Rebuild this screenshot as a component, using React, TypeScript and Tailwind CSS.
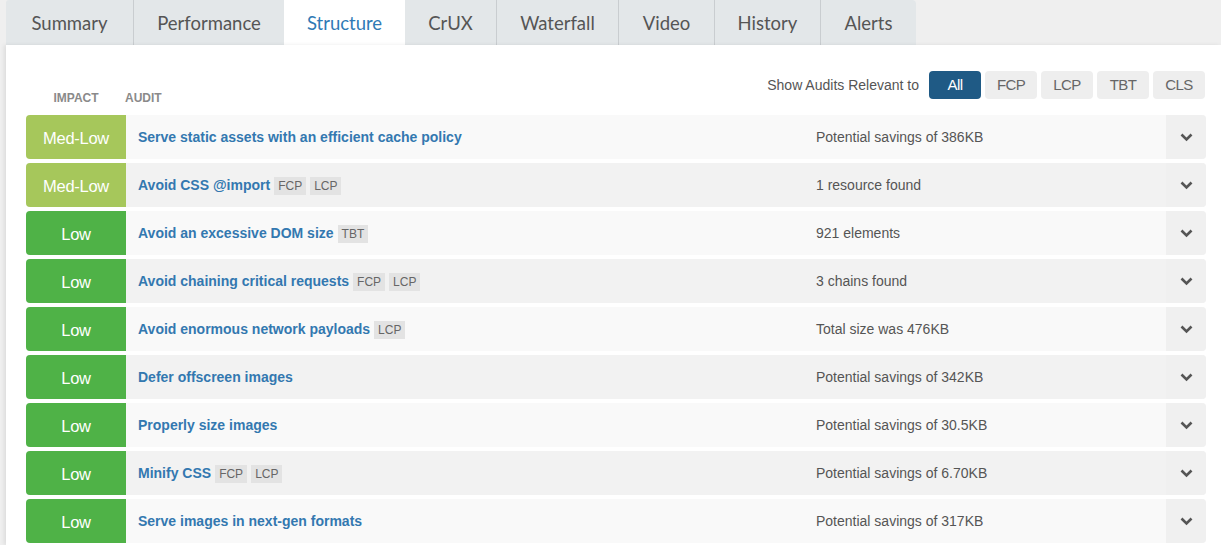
import React from "react";

type Row = {
  impact: "Med-Low" | "Low";
  title: string;
  tags: string[];
  desc: string;
};

const rows: Row[] = [
  { impact: "Med-Low", title: "Serve static assets with an efficient cache policy", tags: [], desc: "Potential savings of 386KB" },
  { impact: "Med-Low", title: "Avoid CSS @import", tags: ["FCP", "LCP"], desc: "1 resource found" },
  { impact: "Low", title: "Avoid an excessive DOM size", tags: ["TBT"], desc: "921 elements" },
  { impact: "Low", title: "Avoid chaining critical requests", tags: ["FCP", "LCP"], desc: "3 chains found" },
  { impact: "Low", title: "Avoid enormous network payloads", tags: ["LCP"], desc: "Total size was 476KB" },
  { impact: "Low", title: "Defer offscreen images", tags: [], desc: "Potential savings of 342KB" },
  { impact: "Low", title: "Properly size images", tags: [], desc: "Potential savings of 30.5KB" },
  { impact: "Low", title: "Minify CSS", tags: ["FCP", "LCP"], desc: "Potential savings of 6.70KB" },
  { impact: "Low", title: "Serve images in next-gen formats", tags: [], desc: "Potential savings of 317KB" },
];

const tabs: { label: string; w: string; active?: boolean }[] = [
  { label: "Summary", w: "w-[127px]" },
  { label: "Performance", w: "w-[151px]" },
  { label: "Structure", w: "w-[121px]", active: true },
  { label: "CrUX", w: "w-[91px]" },
  { label: "Waterfall", w: "w-[122px]" },
  { label: "Video", w: "w-[96px]" },
  { label: "History", w: "w-[106px]" },
  { label: "Alerts", w: "w-[96px]" },
];

function Chevron() {
  return (
    <svg width="13" height="9" viewBox="0 0 13 9">
      <polyline points="1.5,1.5 6.5,6.5 11.5,1.5" fill="none" stroke="#555" strokeWidth="2.6" />
    </svg>
  );
}

export default function App() {
  return (
    <div className="w-[1221px] h-[545px] overflow-hidden bg-[#efefef] flex flex-col pl-[6px] font-['Liberation_Sans',Arial,sans-serif]">
      <div className="flex h-[45px] shrink-0">
        {tabs.map((t, i) => (
          <div
            key={t.label}
            className={`${t.w} h-full flex items-center justify-center pt-[2px] text-[18.5px] font-['Lato',sans-serif] ${
              t.active ? "bg-white text-[#2f7ab5]" : "bg-[#e3e7e9] text-[#555]"
            } ${i > 0 && !t.active && !tabs[i - 1].active ? "border-l border-[#c9cdd0]" : ""} ${
              i === tabs.length - 1 ? "rounded-tr-[4px]" : ""
            } ${i === 0 ? "rounded-tl-[3px]" : ""}`}
          >
            {t.label}
          </div>
        ))}
      </div>
      <div className="flex-1 bg-white pl-[20px] pr-[15px] pt-[26px] shadow-[-2px_0_4px_rgba(0,0,0,0.08)]">
        <div className="flex items-end justify-between h-[28px]">
          <div className="flex items-end text-[12px] font-bold text-[#8a8a8a] translate-y-[8px]">
            <div className="w-[100px] text-center">IMPACT</div>
            <div className="-ml-[1px]">AUDIT</div>
          </div>
          <div className="flex items-center h-[28px] mr-[1px]">
            <span className="text-[14px] text-[#555] mr-[10px]">Show Audits Relevant to</span>
            <div className="flex gap-[4px]">
              {["All", "FCP", "LCP", "TBT", "CLS"].map((f, i) => (
                <div
                  key={f}
                  className={`w-[52px] h-[28px] rounded-[4px] flex items-center justify-center pt-[1px] text-[15px] tracking-[-0.6px] ${
                    i === 0 ? "bg-[#1f5a85] text-white" : "bg-[#eeeeee] text-[#666]"
                  }`}
                >
                  {f}
                </div>
              ))}
            </div>
          </div>
        </div>
        <div className="flex flex-col gap-[4px] mt-[16px]">
          {rows.map((r, i) => (
            <div
              key={r.title}
              className={`flex h-[44px] rounded-[4px] ${i % 2 === 0 ? "bg-[#f9f9f9]" : "bg-[#f2f2f2]"}`}
            >
              <div
                className={`w-[100px] shrink-0 rounded-l-[4px] flex items-center justify-center pt-[3px] text-white text-[16.5px] tracking-[-0.3px] ${
                  r.impact === "Low" ? "bg-[#4fb247]" : "bg-[#a6c75b]"
                }`}
              >
                {r.impact}
              </div>
              <div className="flex-1 flex items-center pl-[12px] pt-[1px]">
                <span className="text-[14px] font-bold text-[#3378b0]">{r.title}</span>
                {r.tags.map((t) => (
                  <span
                    key={t}
                    className="ml-[4px] h-[18px] px-[4px] flex items-center bg-[#e3e3e3] text-[12px] text-[#666]"
                  >
                    {t}
                  </span>
                ))}
              </div>
              <div className="w-[350px] shrink-0 flex items-center pt-[1px] text-[14px] text-[#555]">{r.desc}</div>
              <div className="w-[40px] shrink-0 flex items-center justify-center bg-[#f0f0f0] rounded-r-[4px]">
                <Chevron />
              </div>
            </div>
          ))}
        </div>
      </div>
    </div>
  );
}
